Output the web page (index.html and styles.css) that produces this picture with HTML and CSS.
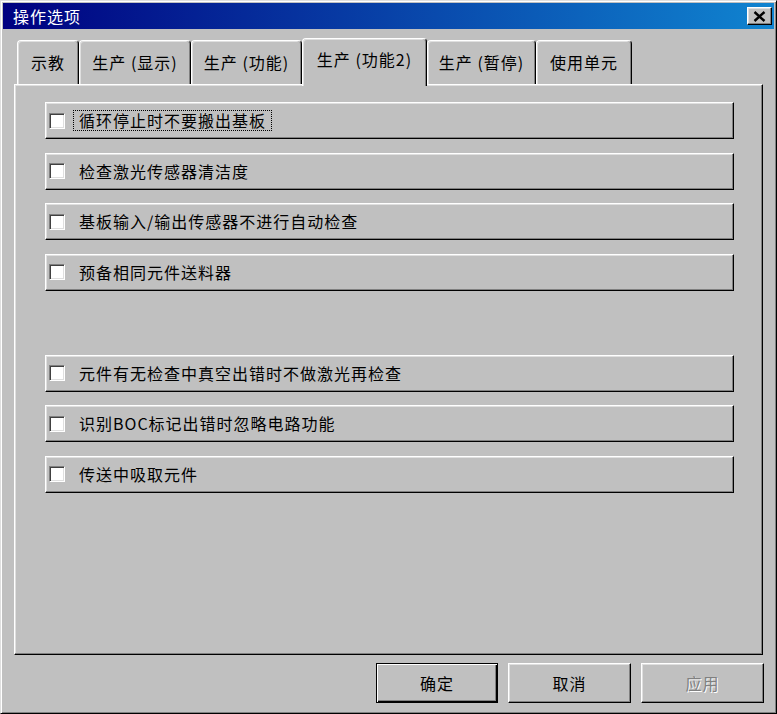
FILE: index.html
```html
<!DOCTYPE html>
<html>
<head>
	<meta charset="UTF-8">
	<title>操作选项</title>
	<link rel="stylesheet" href="styles.css">
</head>
<body>
	<div class="window">
		<div class="titlebar">
			<span class="title">操作选项</span>
			<div class="close">
				<svg width="13" height="11" viewBox="0 0 13 11"><path d="M1.5 1 L11.5 10 M11.5 1 L1.5 10" stroke="#000" stroke-width="2.4" fill="none"/></svg>
			</div>
		</div>
		<div class="client">
			<div class="tabs">
				<div class="tab t1">示教</div>
				<div class="tab t2">生产 (显示)</div>
				<div class="tab t3">生产 (功能)</div>
				<div class="tab t4 active">生产 (功能2)</div>
				<div class="tab t5">生产 (暂停)</div>
				<div class="tab t6">使用单元</div>
			</div>
			<div class="panel">
				<div class="option"><span class="check"></span><span class="label focus">循环停止时不要搬出基板</span></div>
				<div class="option"><span class="check"></span><span class="label">检查激光传感器清洁度</span></div>
				<div class="option"><span class="check"></span><span class="label">基板输入/输出传感器不进行自动检查</span></div>
				<div class="option"><span class="check"></span><span class="label">预备相同元件送料器</span></div>
				<div class="option spaced"><span class="check"></span><span class="label">元件有无检查中真空出错时不做激光再检查</span></div>
				<div class="option"><span class="check"></span><span class="label">识别BOC标记出错时忽略电路功能</span></div>
				<div class="option"><span class="check"></span><span class="label">传送中吸取元件</span></div>
			</div>
			<div class="buttons">
				<div class="btn default">确定</div>
				<div class="btn">取消</div>
				<div class="btn disabled">应用</div>
			</div>
		</div>
	</div>
</body>
</html>
```

FILE: styles.css
```css
*{
	box-sizing:border-box;
}

body{
	margin:0;
	background:#c0c0c0;
	font-family:"Noto Sans CJK SC","Liberation Sans",sans-serif;
	font-size:16px;
	color:#000;
}

.window{
	width:777px;
	height:714px;
	background:#c0c0c0;
	border:1px solid;
	border-color:#dfdfdf #000 #000 #dfdfdf;
	box-shadow:inset 1px 1px #fff,inset -1px -1px #808080;
	padding:2px;
	display:flex;
	flex-direction:column;
}

/* 标题栏 */
.titlebar{
	height:26px;
	background:linear-gradient(to right,#000080,#1084d0);
	display:flex;
	align-items:center;
	justify-content:space-between;
	padding:0 2px 0 10px;
}

.title{
	color:#fff;
	letter-spacing:1px;
	line-height:20px;
}

.close{
	width:25px;
	height:18px;
	background:#c0c0c0;
	border:1px solid;
	border-color:#fff #000 #000 #fff;
	box-shadow:inset -1px -1px #808080,inset 1px 1px #dfdfdf;
	display:flex;
	align-items:center;
	justify-content:center;
}

.client{
	flex:1;
	padding:9px 11px 0 11px;
	display:flex;
	flex-direction:column;
}

/* 选项卡 */
.tabs{
	height:46px;
	display:flex;
	align-items:flex-end;
	padding-left:3px;
}

.tab{
	height:44px;
	border:1px solid;
	border-bottom:none;
	border-color:#fff #000 #000 #fff;
	border-radius:4px 4px 0 0;
	box-shadow:inset -1px 0 #808080,inset 1px 1px #dfdfdf;
	display:flex;
	align-items:center;
	justify-content:center;
	letter-spacing:1px;
	padding-bottom:1px;
}

.t1{width:62px;}
.t2{width:112px;}
.t3{width:111px;}
.t4{width:125px;}
.t5{width:109px;}
.t6{width:96px;}

.tab.active{
	height:48px;
	margin-bottom:-2px;
	position:relative;
	z-index:1;
	background:#c0c0c0;
	padding-bottom:7px;
}

.panel{
	height:571px;
	border:1px solid;
	border-color:#fff #000 #000 #fff;
	box-shadow:inset -1px -1px #808080,inset 1px 1px #dfdfdf;
	padding:17px 28px 0 30px;
	display:flex;
	flex-direction:column;
	gap:13.5px;
}

/* 每一行选项 */
.option{
	height:37px;
	border:1px solid;
	border-color:#fff #000 #000 #fff;
	box-shadow:inset -1px -1px #808080,inset 1px 1px #dfdfdf;
	display:flex;
	align-items:center;
	padding-left:3px;
}

.option.spaced{
	margin-top:50.5px;
}

.check{
	width:16px;
	height:16px;
	background:#fff;
	border:1px solid;
	border-color:#808080 #fff #fff #808080;
	box-shadow:inset 1px 1px #404040,inset -1px -1px #dfdfdf;
	margin-right:8px;
	flex:none;
}

.label{
	border:1px dotted transparent;
	padding:0 5px;
	line-height:19px;
	letter-spacing:1px;
}

.label.focus{
	border-color:#000;
}

/* 底部按钮 */
.buttons{
	display:flex;
	justify-content:flex-end;
	gap:10px;
	margin-top:8px;
	margin-right:-1px;
}

.btn{
	width:123px;
	height:40px;
	border:1px solid;
	border-color:#fff #000 #000 #fff;
	box-shadow:inset -1px -1px #808080,inset 1px 1px #dfdfdf;
	display:flex;
	align-items:center;
	justify-content:center;
	letter-spacing:1px;
}

.btn.default{
	width:122px;
	border-color:#000;
	box-shadow:inset 1px 1px #fff,inset -1px -1px #000,inset -2px -2px #808080;
}

.btn.disabled{
	color:#808080;
	text-shadow:1px 1px #fff;
}
```
